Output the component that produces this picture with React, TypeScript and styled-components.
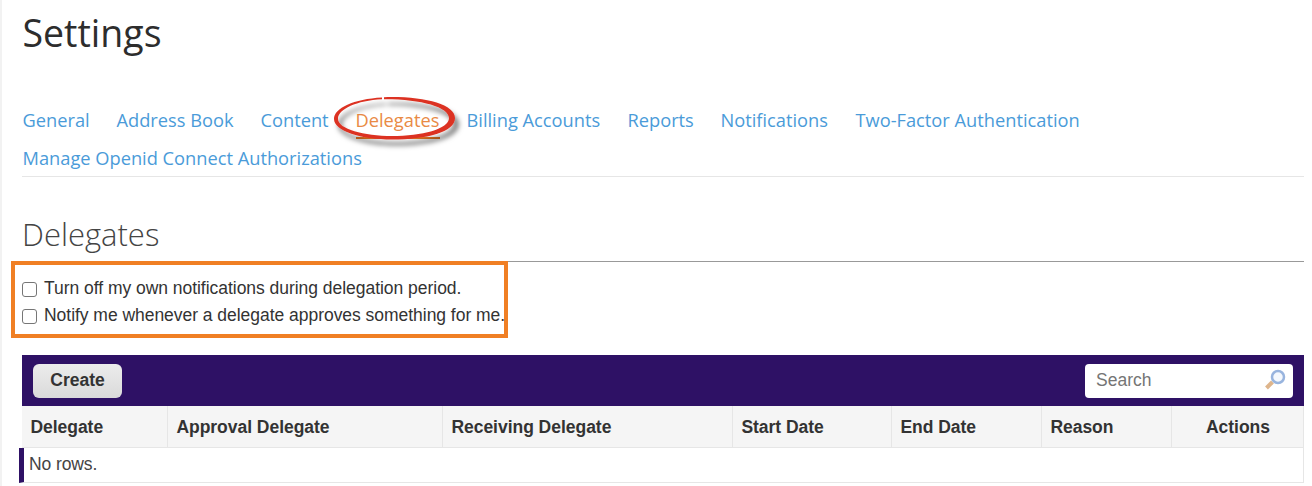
import React from "react";
import styled, { createGlobalStyle } from "styled-components";

const Global = createGlobalStyle`
  * { box-sizing: border-box; }
  body { margin: 0; background: #fff; color: #333; font-family: "Liberation Sans", Arial, sans-serif; overflow: hidden; }
`;

const Page = styled.main`
  height: 486px;
  border-left: 2px solid #f2f2f2;
  padding: 0 8px 0 20px;
  overflow: hidden;
`;

const Title = styled.h1`
  margin: 0;
  padding: 8px 0 0 0.5px;
  height: 101px;
  font: 400 37.5px/50px "Open Sans", sans-serif;
  color: #2d2d2d;
`;

const Tabs = styled.nav`
  display: flex;
  flex-wrap: wrap;
  column-gap: 27px;
  height: 76px;
  padding-left: 0.5px;
  border-bottom: 1px solid #e6e6e6;
  font: 400 18.25px/38px "Open Sans", sans-serif;
  align-content: flex-start;
`;

const Tab = styled.a<{ $active?: boolean; $width: number }>`
  position: relative;
  width: ${(p) => p.$width}px;
  height: 38px;
  white-space: nowrap;
  color: ${(p) => (p.$active ? "#e98a45" : "#4a9bd9")};
`;

const Underline = styled.span`
  position: absolute;
  left: 0;
  right: 0;
  top: 36px;
  height: 2px;
  background: #e87722;
`;

const Ring = styled.svg`
  position: absolute;
  left: -28px;
  top: -11px;
  overflow: visible;
`;

const Heading = styled.h2`
  margin: 0;
  height: 85px;
  padding-top: 35px;
  border-bottom: 1px solid #999;
  font: 300 31px/44px "Open Sans", sans-serif;
  color: #444;
`;

const Options = styled.section`
  width: 497px;
  height: 77px;
  margin: -1px 0 17px -11px;
  padding: 10px 0 0 7px;
  border: 4px solid #f07f24;
  position: relative;
`;

const Option = styled.label`
  display: flex;
  align-items: center;
  height: 27px;
  font-size: 17.5px;
  letter-spacing: -0.035px;
  white-space: nowrap;
`;

const Check = styled.input`
  appearance: none;
  flex: none;
  width: 15px;
  height: 15px;
  margin: 2px 7px 0 0;
  border: 1.5px solid #767676;
  border-radius: 3px;
  background: #fff;
`;

const Toolbar = styled.div`
  display: flex;
  justify-content: space-between;
  align-items: flex-start;
  height: 51px;
  padding: 9px 11px 0;
  background: #2e1165;
`;

const Create = styled.button`
  width: 89px;
  height: 34px;
  border: 0;
  border-radius: 6px;
  padding: 0 0 1px;
  background: linear-gradient(#ececec, #dadada);
  color: #333;
  font: 700 17.5px "Liberation Sans", Arial, sans-serif;
`;

const SearchBox = styled.div`
  display: flex;
  justify-content: space-between;
  width: 208px;
  height: 34px;
  padding: 0 7px 0 11px;
  border-radius: 4px;
  background: #fff;
  color: #757575;
  font-size: 17.5px;
  line-height: 33px;
`;

const HeadRow = styled.div`
  display: grid;
  grid-template-columns: 146px 275px 290px 159px 150px 130px 1fr;
  height: 42px;
  background: #f5f5f5;
  border-bottom: 1px solid #e6e6e6;
`;

const HeadCell = styled.div<{ $center?: boolean }>`
  height: 41px;
  padding-left: ${(p) => (p.$center ? 1 : 8.4)}px;
  border-right: 1px solid #e6e6e6;
  text-align: ${(p) => (p.$center ? "center" : "left")};
  font-weight: 700;
  font-size: 17.5px;
  letter-spacing: -0.03px;
  line-height: 43px;
  white-space: nowrap;
`;

const EmptyRow = styled.div`
  height: 35px;
  margin-left: -3px;
  padding-left: 5px;
  border-left: 5px solid #2e1165;
  border-right: 1px solid #e6e6e6;
  border-bottom: 1px solid #e6e6e6;
  font-size: 17.5px;
  letter-spacing: -0.1px;
  line-height: 33px;
  color: #444;
`;

const tabs: [string, number][] = [
  ["General", 67],
  ["Address Book", 117],
  ["Content", 68],
  ["Delegates", 84],
  ["Billing Accounts", 134],
  ["Reports", 66],
  ["Notifications", 108],
  ["Two-Factor Authentication", 226],
  ["Manage Openid Connect Authorizations", 340],
];

const columns = ["Delegate", "Approval Delegate", "Receiving Delegate", "Start Date", "End Date", "Reason", "Actions"];

export default function App() {
  return (
    <>
      <Global />
      <Page>
        <Title>Settings</Title>
        <Tabs>
          {tabs.map(([name, width]) => (
            <Tab key={name} $width={width} $active={name === "Delegates"}>
              {name}
              {name === "Delegates" && (
                <>
                  <Underline />
                  <Ring width="136" height="64" viewBox="0 0 136 64">
                    <defs>
                      <filter id="shade" x="-20%" y="-30%" width="150%" height="180%">
                        <feDropShadow dx="4" dy="6" stdDeviation="2.5" floodColor="#000" floodOpacity="0.5" />
                      </filter>
                    </defs>
                    <path
                      filter="url(#shade)"
                      fill="#dc3222"
                      d="M54 7.500C26 9 6 18 6 29C6 41 33 49.500 64 49.500C99 49.500 127 42 127 28C127 14 95 6 56 7.200L56 9.200C93 9 121 17 121 28C121 39 94 46 64 46C36 46 10 39 10 29C10 19 29 10.500 54 9.300Z"
                    />
                  </Ring>
                </>
              )}
            </Tab>
          ))}
        </Tabs>
        <Heading>Delegates</Heading>
        <Options>
          <Option><Check type="checkbox" />Turn off my own notifications during delegation period.</Option>
          <Option><Check type="checkbox" />Notify me whenever a delegate approves something for me.</Option>
        </Options>
        <Toolbar>
          <Create>Create</Create>
          <SearchBox>
            Search
            <svg width="22" height="28" viewBox="0 0 22 28">
              <path d="M2.500 24L8.500 18" stroke="#deb58c" strokeWidth="4" />
              <circle cx="14" cy="13" r="6" fill="#f4f8fd" stroke="#98b4de" strokeWidth="2.500" />
            </svg>
          </SearchBox>
        </Toolbar>
        <HeadRow>
          {columns.map((name) => (
            <HeadCell key={name} $center={name === "Actions"}>{name}</HeadCell>
          ))}
        </HeadRow>
        <EmptyRow>No rows.</EmptyRow>
      </Page>
    </>
  );
}
